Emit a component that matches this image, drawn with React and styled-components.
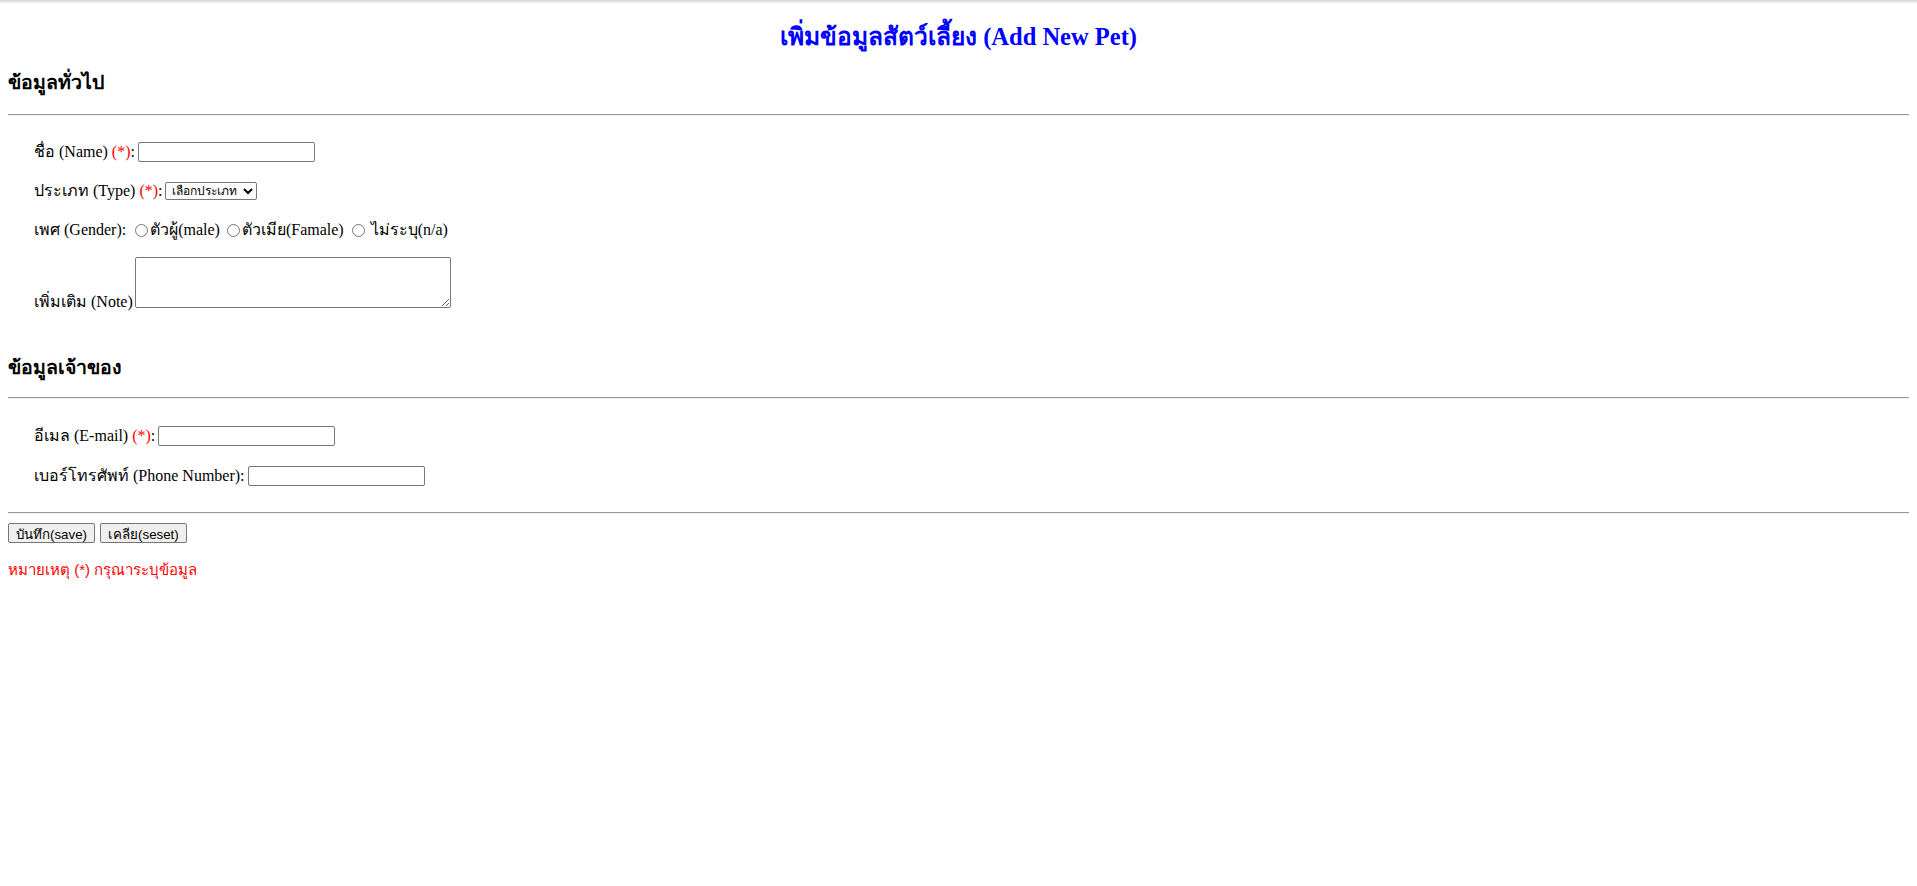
import React from "react";
import styled, { createGlobalStyle } from "styled-components";

const GlobalStyle = createGlobalStyle`
  html, body {
    margin: 0;
    background: #fff;
  }
  body {
    font-family: "Liberation Serif", "Noto Sans", "DejaVu Serif", serif;
    font-size: 16px;
    color: #000;
  }
`;

const TopShade = styled.div`
  height: 4px;
  background: linear-gradient(#d6d5db, #eeeef0 60%, #fff);
`;

const Page = styled.div`
  padding: 0 8px;
  display: flex;
  flex-direction: column;
`;

const Title = styled.h2`
  margin: 19px 0 0;
  text-align: center;
  font-size: 24.5px;
  line-height: 28px;
  font-weight: bold;
  color: #0000ff;
`;

const SectionHeading = styled.h3`
  margin: ${(p) => p.$top}px 0 0;
  font-size: 19.5px;
  line-height: 24px;
  font-weight: bold;
`;

const Rule = styled.hr`
  margin: ${(p) => p.$top}px 0 0;
  height: 0;
  border: 0;
  border-top: 1px solid #9a9a9a;
  border-bottom: 1px solid #eeeeee;
`;

const Row = styled.div`
  margin-top: ${(p) => p.$top}px;
  padding-left: ${(p) => (p.$flush ? 0 : 26)}px;
  display: flex;
  align-items: ${(p) => (p.$bottom ? "flex-end" : "center")};
  min-height: 24px;
  gap: ${(p) => p.$gap || 0}px;
`;

const Label = styled.span`
  white-space: pre;
  line-height: 24px;
  margin-bottom: ${(p) => p.$drop || 0}px;
`;

const Required = styled.span`
  color: #ff0000;
`;

const TextBox = styled.input`
  box-sizing: border-box;
  width: 177px;
  height: 20px;
  margin: 0 0 0 3px;
  padding: 1px 2px;
  border: 1px solid #767676;
  border-radius: 2px;
  font-size: 13.33px;
`;

const Select = styled.select`
  box-sizing: border-box;
  height: 18px;
  width: 92px;
  margin-left: 2px;
  padding: 0 0 0 2px;
  border: 1px solid #767676;
  border-radius: 2px;
  background: #fff;
  font-family: "Liberation Sans", "Noto Sans", sans-serif;
  font-size: 12px;
`;

const Radio = styled.input.attrs({ type: "radio" })`
  width: 13px;
  height: 13px;
  margin: 0 2px 0 ${(p) => p.$left}px;
`;

const NoteArea = styled.textarea`
  box-sizing: border-box;
  width: 316px;
  height: 51px;
  margin: 0 0 0 2px;
  border: 1px solid #767676;
  border-radius: 2px;
  resize: both;
`;

const Button = styled.button`
  box-sizing: border-box;
  height: 20px;
  padding: 0 7px;
  border: 1px solid #767676;
  border-radius: 2px;
  background: #efefef;
  font-family: "Liberation Sans", "Noto Sans", sans-serif;
  font-size: 13.33px;
  color: #000;
`;

const Footnote = styled.div`
  margin-top: 15px;
  color: #ff0000;
  font-family: "Liberation Sans", "Noto Sans", sans-serif;
  font-size: 15px;
  line-height: 20px;
`;

export default function App() {
  return (
    <>
      <GlobalStyle />
      <TopShade />
      <Page>
        <Title>เพิ่มข้อมูลสัตว์เลี้ยง (Add New Pet)</Title>

        <SectionHeading $top={20}>ข้อมูลทั่วไป</SectionHeading>
        <Rule $top={19} />

        <Row $top={24}>
          <Label>
            ชื่อ (Name) <Required>(*)</Required>:
          </Label>
          <TextBox type="text" />
        </Row>
        <Row $top={15}>
          <Label>
            ประเภท (Type) <Required>(*)</Required>:
          </Label>
          <Select defaultValue="">
            <option value="">เลือกประเภท</option>
            <option value="dog">สุนัข</option>
            <option value="cat">แมว</option>
          </Select>
        </Row>
        <Row $top={15}>
          <Label>เพศ (Gender): </Label>
          <Radio name="gender" $left={5} />
          <Label>ตัวผู้(male) </Label>
          <Radio name="gender" $left={3} />
          <Label>ตัวเมีย(Famale) </Label>
          <Radio name="gender" $left={4} />
          <Label> ไม่ระบุ(n/a)</Label>
        </Row>
        <Row $top={15} $bottom>
          <Label $drop={-6}>เพิ่มเติม (Note)</Label>
          <NoteArea />
        </Row>

        <SectionHeading $top={48}>ข้อมูลเจ้าของ</SectionHeading>
        <Rule $top={17} />

        <Row $top={25}>
          <Label>
            อีเมล (E-mail) <Required>(*)</Required>:
          </Label>
          <TextBox type="text" />
        </Row>
        <Row $top={16}>
          <Label>เบอร์โทรศัพท์ (Phone Number):</Label>
          <TextBox type="text" />
        </Row>

        <Rule $top={24} />
        <Row $top={7} $flush $gap={5}>
          <Button type="button">บันทึก(save)</Button>
          <Button type="button">เคลีย(seset)</Button>
        </Row>
        <Footnote>หมายเหตุ (*) กรุณาระบุข้อมูล</Footnote>
      </Page>
    </>
  );
}
